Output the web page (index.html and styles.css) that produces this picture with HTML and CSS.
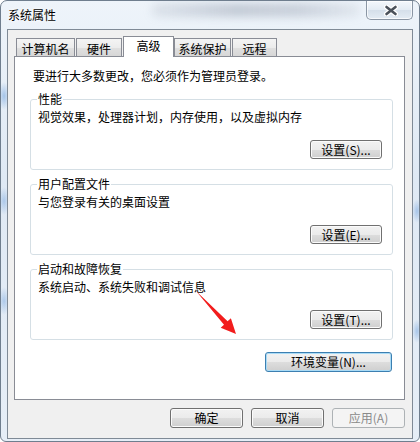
FILE: index.html
```html
<!DOCTYPE html>
<html lang="zh-CN">
<head>
<meta charset="utf-8">
<title>系统属性</title>
<link rel="stylesheet" href="styles.css">
</head>
<body>
<div class="window">
  <div class="glass-blur"></div>
  <div class="titlebar">
    <span class="title">系统属性</span>
    <button class="close" aria-label="关闭">
      <svg width="14" height="11" viewBox="0 0 14 11">
        <path d="M2.5 2 L11.5 9 M11.5 2 L2.5 9" stroke="#ffffff" stroke-width="5" stroke-linecap="round"/>
        <path d="M2.5 2 L11.5 9 M11.5 2 L2.5 9" stroke="#4b525b" stroke-width="2.6" stroke-linecap="round"/>
      </svg>
    </button>
  </div>
  <div class="client">
    <div class="tabs">
      <div class="tab t1">计算机名</div>
      <div class="tab t2">硬件</div>
      <div class="tab t3 active">高级</div>
      <div class="tab t4">系统保护</div>
      <div class="tab t5">远程</div>
    </div>
    <div class="panel">
      <p class="note">要进行大多数更改，您必须作为管理员登录。</p>
      <fieldset class="group">
        <legend>性能</legend>
        <p class="desc">视觉效果，处理器计划，内存使用，以及虚拟内存</p>
        <div class="row"><button class="btn set">设置(S)...</button></div>
      </fieldset>
      <fieldset class="group">
        <legend>用户配置文件</legend>
        <p class="desc">与您登录有关的桌面设置</p>
        <div class="row"><button class="btn set">设置(E)...</button></div>
      </fieldset>
      <fieldset class="group">
        <legend>启动和故障恢复</legend>
        <p class="desc">系统启动、系统失败和调试信息</p>
        <div class="row"><button class="btn set">设置(T)...</button></div>
      </fieldset>
      <div class="env-row"><button class="btn env">环境变量(N)...</button></div>
      <svg class="arrow" width="52" height="54" viewBox="0 0 52 54">
        <polygon points="6,6 37.6,36.3 40.9,33.2 46,49 30.7,42.8 34,39.7" fill="#f21d1d"/>
      </svg>
    </div>
    <div class="footer">
      <button class="btn foot">确定</button>
      <button class="btn foot">取消</button>
      <button class="btn foot" disabled>应用(A)</button>
    </div>
  </div>
</div>
</body>
</html>
```
FILE: styles.css
```css
* { box-sizing: border-box; }
html, body { margin: 0; padding: 0; }
body {
  width: 420px;
  height: 442px;
  overflow: hidden;
  background: #ffffff;
  font-family: "Noto Sans CJK SC", "Noto Sans", sans-serif;
  font-size: 12px;
  color: #000;
}

.window {
  position: relative;
  width: 420px;
  height: 442px;
  border: 1px solid #6f7e8e;
  border-radius: 7px 7px 6px 6px;
  overflow: hidden;
  display: flex;
  flex-direction: column;
  background:
    radial-gradient(ellipse 6px 14px at 3px 95px, rgba(110,160,220,.55), transparent),
    radial-gradient(ellipse 6px 14px at 3px 200px, rgba(110,160,220,.45), transparent),
    radial-gradient(ellipse 6px 14px at 3px 300px, rgba(110,160,220,.45), transparent),
    radial-gradient(ellipse 5px 12px at 416px 210px, rgba(110,160,220,.5), transparent),
    radial-gradient(ellipse 5px 12px at 416px 330px, rgba(110,160,220,.5), transparent),
    linear-gradient(to bottom, #eef4fa, #dfe9f4 40%, #e6eef7);
}

.glass-blur {
  position: absolute;
  left: 150px;
  top: 2px;
  width: 210px;
  height: 14px;
  border-radius: 8px;
  background: linear-gradient(90deg, rgba(130,140,160,.15), rgba(120,130,150,.35) 40%, rgba(120,130,150,.3) 70%, rgba(130,140,160,.1));
  filter: blur(4px);
}

.titlebar {
  position: relative;
  height: 28px;
  flex: none;
  display: flex;
  justify-content: space-between;
  align-items: flex-start;
  padding: 0 6px 0 7px;
}
.title {
  padding-top: 7px;
  line-height: 14px;
  text-shadow: 0 0 5px #fff, 0 0 3px #fff;
}
.close {
  width: 47px;
  height: 19px;
  padding: 0;
  border: 1px solid #8a96a4;
  border-top: none;
  border-radius: 0 0 5px 5px;
  background: linear-gradient(#f4f8fc, #e3ebf3 50%, #d5dfea 52%, #e4ecf4);
  box-shadow: inset 0 0 0 1px rgba(255,255,255,.7);
  display: flex;
  align-items: center;
  justify-content: center;
}
.close svg { margin-top: 1px; margin-left: 2px; }

.client {
  flex: 1;
  margin: 0 6px 2px 6px;
  border: 1px solid #7f8a96;
  background: #f0f0f0;
  padding: 6px 7px 10px 6px;
  display: flex;
  flex-direction: column;
}

.tabs {
  position: relative;
  z-index: 1;
  height: 20px;
  flex: none;
  display: flex;
  align-items: flex-end;
  padding-left: 2px;
}
.tab {
  height: 18px;
  border: 1px solid #898c95;
  border-bottom: none;
  background: linear-gradient(#f4f4f4, #ececec 50%, #e0e0e0 51%, #d7d7d7);
  text-align: center;
  line-height: 15px;
  padding-top: 2px;
  white-space: nowrap;
}
.tab.active {
  height: 21px;
  margin-bottom: -1px;
  background: #fff;
  padding-top: 1px;
}
.t1 { width: 59px; }
.t2 { width: 46px; margin-left: 1px; }
.t3 { width: 51px; margin-left: 1px; }
.t4 { width: 57px; }
.t5 { width: 45px; margin-left: 1px; }

.panel {
  position: relative;
  height: 344px;
  flex: none;
  border: 1px solid #898c95;
  background: #fff;
  padding: 12px 11px 0 15px;
  display: flex;
  flex-direction: column;
}
.note {
  margin: 0 0 9px;
  padding-left: 3px;
  line-height: 14px;
}
.group {
  margin: 0 0 7px;
  padding: 0 10px 10px 7px;
  border: 1px solid #d5dfe5;
  border-radius: 3px;
  min-inline-size: 0;
}
.group legend {
  padding: 0 1px;
  margin-left: -1px;
  line-height: 14px;
}
.desc {
  margin: 4px 0 0;
  line-height: 14px;
}
.row {
  display: flex;
  justify-content: flex-end;
  margin-top: 16px;
}
.env-row {
  display: flex;
  justify-content: flex-end;
  margin-top: 5px;
  padding-right: 1px;
}

.btn {
  font: inherit;
  font-size: 12px;
  color: #000;
  height: 20px;
  padding: 0;
  border: 1px solid #707070;
  border-radius: 3px;
  background: linear-gradient(#f2f2f2, #ebebeb 50%, #dddddd 51%, #cfcfcf);
  box-shadow: inset 0 0 0 1px #fbfbfb;
  line-height: 16px;
  white-space: nowrap;
}
.btn.set { width: 72px; height: 19px; line-height: 15px; }
.btn.env {
  width: 127px;
  border-color: #3c7fb1;
  box-shadow: inset 0 0 0 1px #a9dbf6;
}
.btn.foot { width: 73px; }
.btn:disabled {
  color: #8a8a8a;
  border-color: #adb2b5;
  background: #f4f4f4;
  box-shadow: none;
}

.footer {
  display: flex;
  justify-content: flex-end;
  gap: 8px;
  margin-top: 8px;
}

.arrow {
  position: absolute;
  left: 175px;
  top: 228px;
  pointer-events: none;
}
```
